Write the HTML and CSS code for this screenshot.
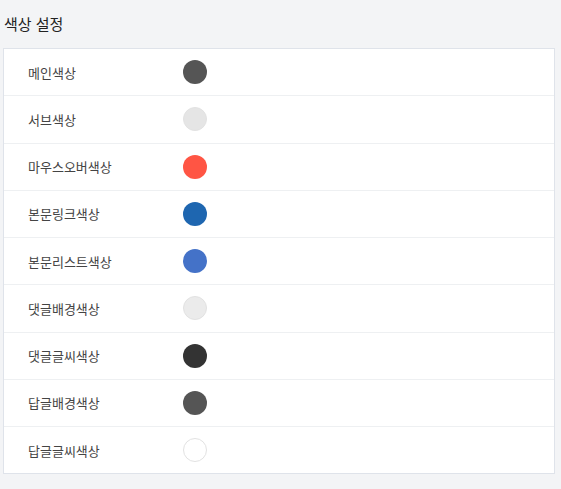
FILE: index.html
```html
<!DOCTYPE html>
<html lang="ko">
<head>
<meta charset="utf-8">
<link rel="stylesheet" href="styles.css">
</head>
<body>
<div class="page">
  <h2 class="title">색상 설정</h2>
  <div class="card">
    <div class="row"><span class="label">메인색상</span><span class="swatch" style="background:#555555"></span></div>
    <div class="row"><span class="label">서브색상</span><span class="swatch light" style="background:#e5e5e5"></span></div>
    <div class="row"><span class="label">마우스오버색상</span><span class="swatch" style="background:#ff5544"></span></div>
    <div class="row"><span class="label">본문링크색상</span><span class="swatch" style="background:#1e66b0"></span></div>
    <div class="row"><span class="label">본문리스트색상</span><span class="swatch" style="background:#4472c8"></span></div>
    <div class="row"><span class="label">댓글배경색상</span><span class="swatch light" style="background:#ebebeb"></span></div>
    <div class="row"><span class="label">댓글글씨색상</span><span class="swatch" style="background:#333333"></span></div>
    <div class="row"><span class="label">답글배경색상</span><span class="swatch" style="background:#555555"></span></div>
    <div class="row"><span class="label">답글글씨색상</span><span class="swatch light" style="background:#ffffff"></span></div>
  </div>
</div>
</body>
</html>
```
FILE: styles.css
```css
html, body {
  margin: 0;
  padding: 0;
  background: #f3f4f6;
  font-family: "Noto Sans CJK KR", "Noto Sans", sans-serif;
}
.page {
  padding: 0 6px 0 3px;
}
.title {
  margin: 0;
  padding: 12px 0 12px 1px;
  font-size: 15px;
  line-height: 24px;
  font-weight: 400;
  color: #222;
}
.card {
  background: #fff;
  border: 1px solid #dfe3ea;
}
.row {
  display: flex;
  align-items: center;
  height: 46.25px;
  padding-left: 24px;
  border-bottom: 1px solid #eef0f2;
}
.row:last-child {
  border-bottom: none;
}
.label {
  width: 155px;
  font-size: 13px;
  color: #444;
}
.swatch {
  width: 24px;
  height: 24px;
  border-radius: 50%;
  box-sizing: border-box;
}
.swatch.light {
  border: 1px solid #e2e2e2;
}
```
